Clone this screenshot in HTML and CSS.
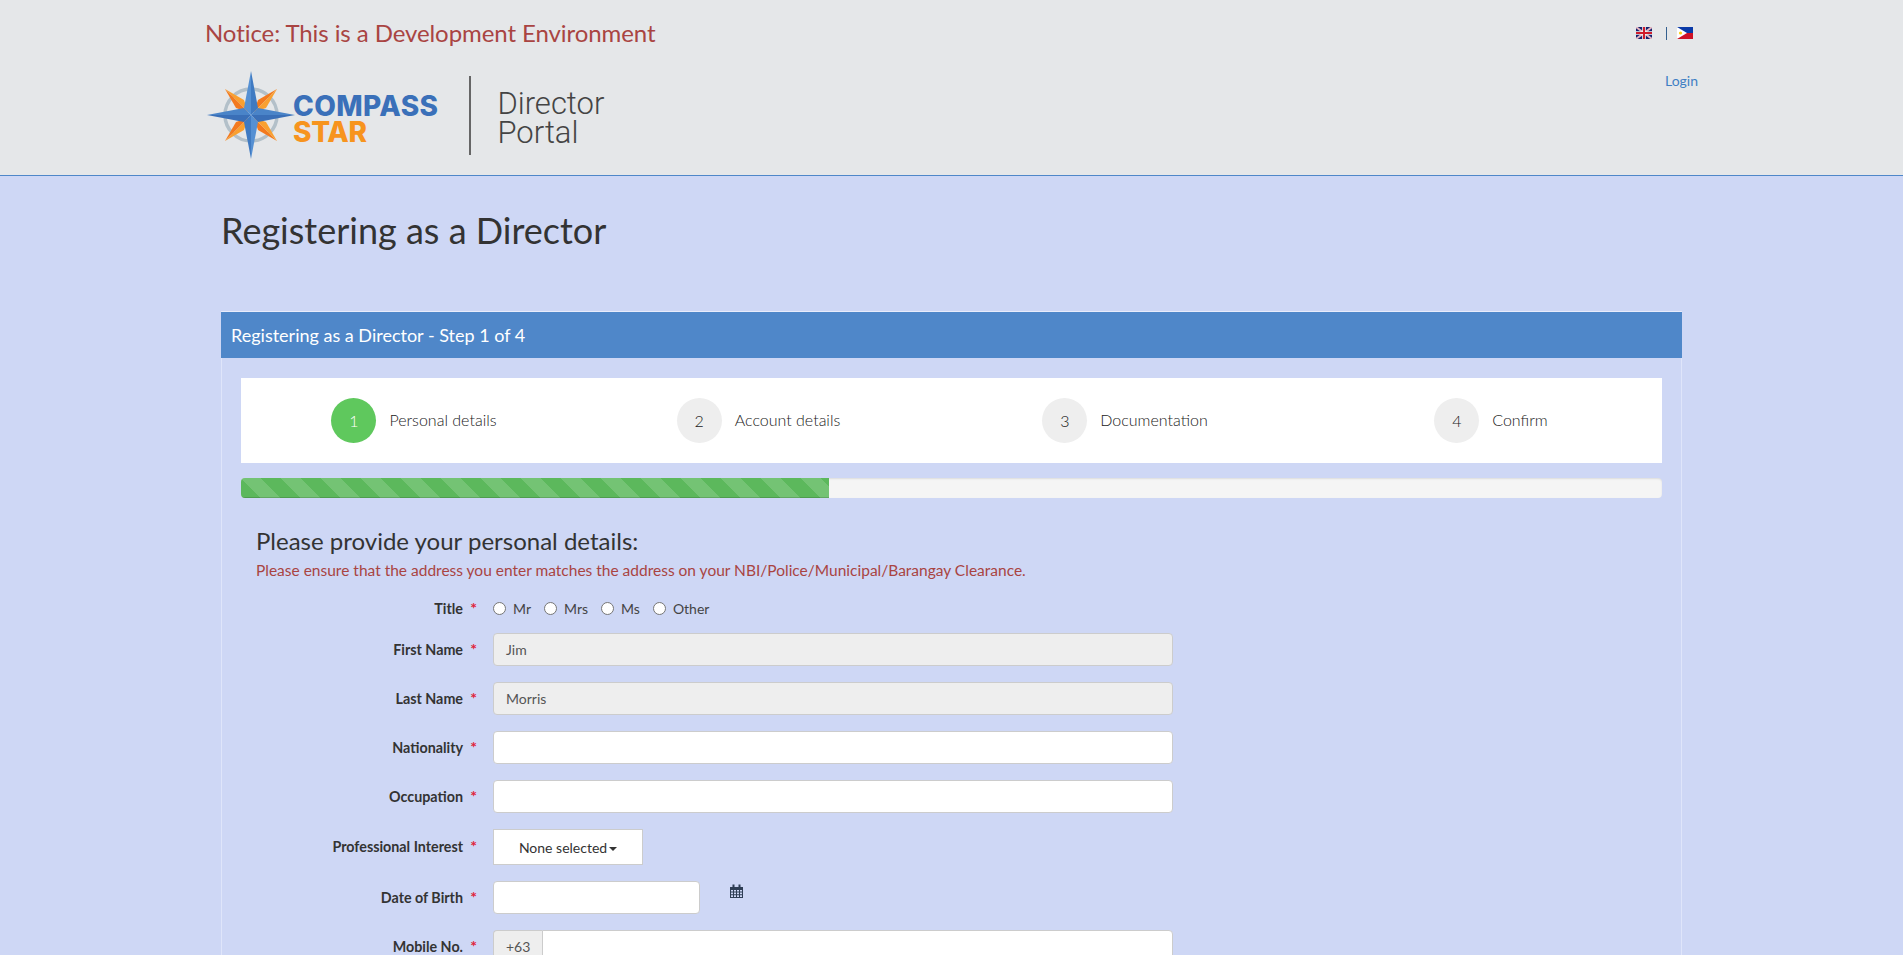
FILE: index.html
```html
<!DOCTYPE html>
<html>
<head>
    <title>Director Portal</title>
    <link rel="stylesheet" href="styles.css">
</head>
<body>
    <!-- Page header -->
    <header class="site-header">
        <div class="header-left">
            <p class="notice">Notice: This is a Development Environment</p>
            <div class="logo">
                <svg class="logo-star" width="90" height="90" viewBox="-45 -45 90 90">
                    <circle r="26" fill="none" stroke="#b3c0c9" stroke-width="3.5"/>
                    <polygon points="-26,-26 -7,-15 -3,-3" fill="#f9a030"/>
                    <polygon points="-26,-26 -15,-7 -3,-3" fill="#f37a1f"/>
                    <polygon points="26,-26 7,-15 3,-3" fill="#f37a1f"/>
                    <polygon points="26,-26 15,-7 3,-3" fill="#f9a030"/>
                    <polygon points="-26,26 -7,15 -3,3" fill="#f9a030"/>
                    <polygon points="-26,26 -15,7 -3,3" fill="#f37a1f"/>
                    <polygon points="26,26 7,15 3,3" fill="#f37a1f"/>
                    <polygon points="26,26 15,7 3,3" fill="#f9a030"/>
                    <polygon points="-44,0 -7,-7 0,0" fill="#4a84c8"/>
                    <polygon points="-44,0 -7,7 0,0" fill="#3a6fb7"/>
                    <polygon points="44,0 7,-7 0,0" fill="#4a84c8"/>
                    <polygon points="44,0 7,7 0,0" fill="#3a6fb7"/>
                    <polygon points="0,-44 -7,-7 0,0" fill="#5590d3"/>
                    <polygon points="0,-44 7,-7 0,0" fill="#3f7ac2"/>
                    <polygon points="0,44 -7,7 0,0" fill="#3f7ac2"/>
                    <polygon points="0,44 7,7 0,0" fill="#5590d3"/>
                </svg>
                <div class="logo-words">
                    <span class="logo-compass">COMPASS</span>
                    <span class="logo-star-word">STAR</span>
                </div>
                <div class="logo-divider"></div>
                <div class="logo-portal">Director<br>Portal</div>
            </div>
        </div>
        <div class="header-right">
            <div class="flags">
                <svg width="16" height="12" viewBox="0 0 16 12">
                    <rect width="16" height="12" fill="#14206e"/>
                    <path d="M0 0L16 12M16 0L0 12" stroke="#e3b6c2" stroke-width="2"/>
                    <path d="M8 0V12M0 6H16" stroke="#f2f2f2" stroke-width="3.6"/>
                    <path d="M8 0V12M0 6H16" stroke="#cf1b2b" stroke-width="2"/>
                </svg>
                <span class="flag-sep"></span>
                <svg width="16" height="12" viewBox="0 0 16 12">
                    <rect width="16" height="6" fill="#0a3aa8"/>
                    <rect y="6" width="16" height="6" fill="#ce1126"/>
                    <polygon points="0,0 10,6 0,12" fill="#fff"/>
                    <circle cx="3.5" cy="6" r="1.6" fill="#fcd116"/>
                </svg>
            </div>
            <a class="login-link" href="#">Login</a>
        </div>
    </header>

    <main class="content">
        <h1 class="page-title">Registering as a Director</h1>

        <section class="panel">
            <div class="panel-heading">Registering as a Director - Step 1 of 4</div>
            <div class="panel-body">
                <!-- Wizard steps -->
                <div class="steps">
                    <div class="step active"><span class="step-num">1</span><span class="step-text">Personal details</span></div>
                    <div class="step"><span class="step-num">2</span><span class="step-text">Account details</span></div>
                    <div class="step"><span class="step-num">3</span><span class="step-text">Documentation</span></div>
                    <div class="step"><span class="step-num">4</span><span class="step-text">Confirm</span></div>
                </div>

                <div class="progress"><div class="progress-bar"></div></div>

                <h3 class="form-title">Please provide your personal details:</h3>
                <p class="form-warning">Please ensure that the address you enter matches the address on your NBI/Police/Municipal/Barangay Clearance.</p>

                <form class="form">
                    <div class="row row-title">
                        <label class="row-label">Title</label>
                        <div class="radios">
                            <label class="radio"><span class="radio-dot"></span>Mr</label>
                            <label class="radio"><span class="radio-dot"></span>Mrs</label>
                            <label class="radio"><span class="radio-dot"></span>Ms</label>
                            <label class="radio"><span class="radio-dot"></span>Other</label>
                        </div>
                    </div>
                    <div class="row">
                        <label class="row-label">First Name</label>
                        <div class="input input-disabled">Jim</div>
                    </div>
                    <div class="row">
                        <label class="row-label">Last Name</label>
                        <div class="input input-disabled">Morris</div>
                    </div>
                    <div class="row">
                        <label class="row-label">Nationality</label>
                        <div class="input"></div>
                    </div>
                    <div class="row">
                        <label class="row-label">Occupation</label>
                        <div class="input"></div>
                    </div>
                    <div class="row row-select">
                        <label class="row-label">Professional Interest</label>
                        <div class="select-btn">None selected<span class="caret"></span></div>
                    </div>
                    <div class="row">
                        <label class="row-label">Date of Birth</label>
                        <div class="input input-date"></div>
                        <svg class="calendar" width="13" height="14" viewBox="0 0 13 14">
                            <path d="M0 3H13V14H0Z" fill="#2f3e55"/>
                            <path d="M1 6H3V7.6H1ZM4 6H6V7.6H4ZM7 6H9V7.6H7ZM10 6H12V7.6H10ZM1 8.6H3V10.2H1ZM4 8.6H6V10.2H4ZM7 8.6H9V10.2H7ZM10 8.6H12V10.2H10ZM1 11.2H3V13H1ZM4 11.2H6V13H4ZM7 11.2H9V13H7ZM10 11.2H12V13H10Z" fill="#ced7f5"/>
                            <path d="M2.5 0.5H4.5V4H2.5ZM8.5 0.5H10.5V4H8.5Z" fill="#2f3e55"/>
                        </svg>
                    </div>
                    <div class="row">
                        <label class="row-label">Mobile No.</label>
                        <div class="input-group">
                            <span class="input-addon">+63</span>
                            <div class="input input-joined"></div>
                        </div>
                    </div>
                </form>
            </div>
        </section>
    </main>
</body>
</html>
```

FILE: styles.css
```css
/* Global styles */
html, body {
    height: 955px;
    overflow: hidden;
}

body {
    margin: 0;
    background-color: #ced7f5;
    font-family: Lato, "Open Sans", sans-serif;
    font-size: 14px;
    color: #333;
}

* {
    box-sizing: border-box;
}

/* Header */
.site-header {
    height: 176px;
    background-color: #e5e7e9;
    border-bottom: 1px solid #4f87c9;
    padding: 0 205px;
    display: flex;
    justify-content: space-between;
}

.notice {
    margin: 19px 0 0;
    font-size: 24px;
    line-height: 28px;
    letter-spacing: -0.08px;
    color: #a94442;
}

.logo {
    display: flex;
    align-items: center;
    margin-top: 23px;
    height: 90px;
}

.logo-star {
    flex: none;
    margin-left: 1px;
    margin-right: -3px;
}

.logo-words {
    display: flex;
    flex-direction: column;
    padding-top: 8px;
    font-family: Inter, "Liberation Sans", sans-serif;
    font-weight: 800;
    font-size: 28px;
    line-height: 26px;
}

.logo-compass {
    color: #3a70b9;
    letter-spacing: 0.4px;
}

.logo-star-word {
    color: #f7941e;
    letter-spacing: -0.3px;
}

.logo-divider {
    width: 2px;
    height: 79px;
    background-color: #666;
    margin: 0 26px 0 31px;
}

.logo-portal {
    padding-top: 5px;
    font-family: Roboto, sans-serif;
    font-weight: 300;
    font-size: 31px;
    line-height: 29px;
    color: #444;
}

.header-right {
    display: flex;
    flex-direction: column;
    align-items: flex-end;
}

.flags {
    display: flex;
    align-items: center;
    margin-top: 27px;
    margin-right: 5px;
    height: 12px;
}

.flag-sep {
    width: 1px;
    height: 13px;
    background-color: #34608f;
    margin: 0 10px 0 14px;
}

.login-link {
    margin-top: 33px;
    font-size: 14px;
    line-height: 18px;
    color: #3f7fc4;
    text-decoration: none;
}

/* Page content */
.content {
    padding: 0 221px;
}

.page-title {
    margin: 0;
    padding-top: 34px;
    font-size: 36px;
    font-weight: 400;
    line-height: 40px;
}

.panel {
    margin-top: 61px;
    border: 1px solid #dfe5fa;
    border-top-color: #e8ecfb;
}

.panel-heading {
    height: 46px;
    margin: 0 -1px;
    padding-left: 10px;
    background-color: #4f87c9;
    color: #fff;
    font-size: 18px;
    line-height: 47px;
}

.panel-body {
    padding: 20px 19px 0;
}

/* Wizard steps */
.steps {
    display: grid;
    grid-template-columns: 346px 343px 390px 1fr;
    align-items: center;
    height: 85px;
    background-color: #fff;
}

.step {
    display: flex;
    align-items: center;
    justify-content: center;
    font-size: 16px;
    font-weight: 300;
    color: #1a1a1a;
}

.step-num {
    width: 45px;
    height: 45px;
    margin-right: 13px;
    border-radius: 50%;
    background-color: #eee;
    text-align: center;
    line-height: 45px;
}

.step-text {
    padding-bottom: 2px;
}

.active .step-num {
    background-color: #5fc85d;
    color: #fff;
}

/* Progress bar */
.progress {
    height: 20px;
    margin-top: 15px;
    border-radius: 4px;
    background-color: #f5f5f5;
    overflow: hidden;
    box-shadow: inset 0 1px 2px rgba(0, 0, 0, 0.1);
}

.progress-bar {
    width: 41.4%;
    height: 100%;
    background-color: #5cb85c;
    background-image: linear-gradient(45deg, rgba(255, 255, 255, 0.15) 25%, transparent 25%, transparent 50%, rgba(255, 255, 255, 0.15) 50%, rgba(255, 255, 255, 0.15) 75%, transparent 75%, transparent);
    background-size: 40px 40px;
    box-shadow: inset 0 -1px 0 rgba(0, 0, 0, 0.15);
}

/* Form */
.form-title {
    margin: 28px 0 0 15px;
    font-size: 24px;
    font-weight: 400;
    line-height: 30px;
}

.form-warning {
    margin: 4px 0 0 15px;
    font-size: 15.5px;
    line-height: 20px;
    color: #a94442;
}

.form {
    margin-top: 16px;
}

.row {
    display: flex;
    align-items: center;
    height: 33px;
    margin-bottom: 16px;
}

.row-title {
    height: 24px;
    margin-bottom: 13px;
}

.row-select {
    height: 36px;
}

.row-select .row-label {
    margin-top: -2px;
}

.row-label {
    width: 222px;
    text-align: right;
    font-weight: 700;
    font-size: 14.3px;
    position: relative;
}

.row-label::after {
    content: "*";
    position: absolute;
    right: -14px;
    top: -2px;
    font-size: 16px;
    color: #e0243a;
}

.radios {
    display: flex;
    margin-left: 30px;
}

.radio {
    display: flex;
    align-items: center;
    margin-right: 13px;
    font-size: 14px;
    color: #444;
}

.radio-dot {
    width: 13px;
    height: 13px;
    margin-right: 7px;
    border: 1px solid #767676;
    border-radius: 50%;
    background-color: #fff;
}

.input {
    width: 680px;
    height: 33px;
    margin-left: 30px;
    padding: 0 12px;
    border: 1px solid #ccc;
    border-radius: 4px;
    background-color: #fff;
    font-size: 14px;
    line-height: 31px;
    color: #555;
}

.input-disabled {
    background-color: #eee;
}

.input-date {
    width: 207px;
}

.calendar {
    margin: -14px 0 0 30px;
}

.select-btn {
    width: 150px;
    height: 36px;
    margin-left: 30px;
    border: 1px solid #ccc;
    background-color: #fff;
    color: #333;
    text-align: center;
    font-size: 14px;
    line-height: 35px;
}

.caret {
    display: inline-block;
    margin-left: 2px;
    vertical-align: middle;
    border-top: 4px solid #333;
    border-left: 4px solid transparent;
    border-right: 4px solid transparent;
}

.input-group {
    display: flex;
    margin-left: 30px;
}

.input-addon {
    width: 49px;
    height: 33px;
    padding-left: 12px;
    border: 1px solid #ccc;
    border-right: none;
    border-radius: 4px 0 0 4px;
    background-color: #eee;
    line-height: 31px;
    color: #555;
}

.input-joined {
    width: 631px;
    margin-left: 0;
    border-radius: 0 4px 4px 0;
}
```
